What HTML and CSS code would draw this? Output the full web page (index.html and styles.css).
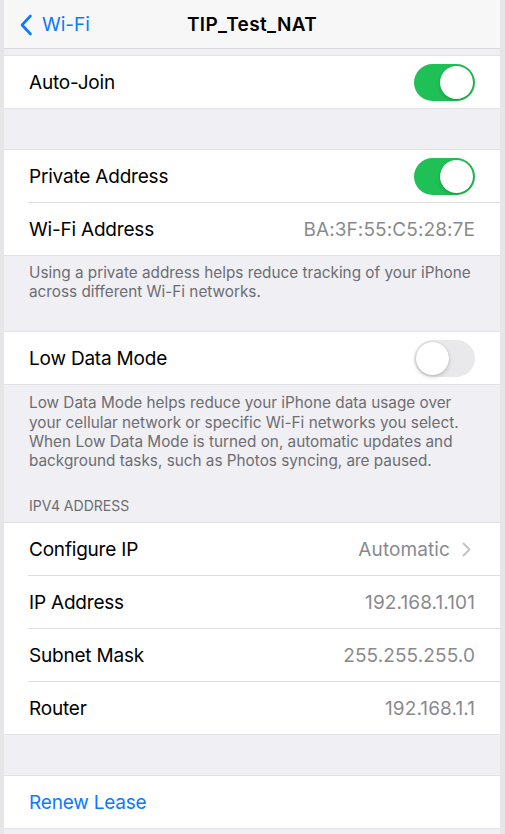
FILE: index.html
```html
<!DOCTYPE html>
<html lang="en">
<head>
<meta charset="utf-8">
<title>TIP_Test_NAT</title>
<link rel="stylesheet" href="styles.css">
</head>
<body>
<div class="screen">
  <header class="navbar">
    <div class="back">
      <svg class="back-icon" width="14" height="22" viewBox="0 0 14 22"><path d="M11.5 2 L3 11 L11.5 20" fill="none" stroke="#0a7aff" stroke-width="2.6" stroke-linecap="round" stroke-linejoin="round"/></svg>
      <span>Wi-Fi</span>
    </div>
    <div class="title">TIP_Test_NAT</div>
  </header>

  <section class="group g-first">
    <div class="row"><span class="label">Auto-Join</span><span class="toggle on"><span class="knob"></span></span></div>
  </section>

  <section class="group g-gap">
    <div class="row"><span class="label">Private Address</span><span class="toggle on"><span class="knob"></span></span></div>
    <div class="row sep"><span class="label">Wi-Fi Address</span><span class="value">BA:3F:55:C5:28:7E</span></div>
  </section>
  <p class="footer f1">Using a private address helps reduce tracking of your iPhone across different Wi-Fi networks.</p>

  <section class="group">
    <div class="row"><span class="label">Low Data Mode</span><span class="toggle"><span class="knob"></span></span></div>
  </section>
  <p class="footer f2">Low Data Mode helps reduce your iPhone data usage over your cellular network or specific Wi-Fi networks you select. When Low Data Mode is turned on, automatic updates and background tasks, such as Photos syncing, are paused.</p>

  <h2 class="section-title">IPV4 ADDRESS</h2>
  <section class="group">
    <div class="row"><span class="label">Configure IP</span><span class="value">Automatic<svg class="chev" width="9" height="15" viewBox="0 0 9 15"><path d="M1.5 1.5 L7.5 7.5 L1.5 13.5" fill="none" stroke="#c4c4c8" stroke-width="2" stroke-linecap="round" stroke-linejoin="round"/></svg></span></div>
    <div class="row sep"><span class="label">IP Address</span><span class="value">192.168.1.101</span></div>
    <div class="row sep"><span class="label">Subnet Mask</span><span class="value">255.255.255.0</span></div>
    <div class="row sep"><span class="label">Router</span><span class="value">192.168.1.1</span></div>
  </section>

  <section class="group g-gap">
    <div class="row"><span class="label link">Renew Lease</span></div>
  </section>
</div>
</body>
</html>
```

FILE: styles.css
```css
html, body {
  margin: 0;
  padding: 0;
}
body {
  background: #e6e6e9;
  font-family: Inter, "Noto Sans", "Liberation Sans", sans-serif;
  -webkit-font-smoothing: antialiased;
}
.screen {
  width: 496px;
  margin-left: 4px;
  min-height: 834px;
  background: #efeff4;
  overflow: hidden;
}
.navbar {
  height: 48px;
  background: #f7f7f8;
  border-bottom: 1px solid #d9d9dd;
  display: flex;
  align-items: center;
  justify-content: center;
  position: relative;
}
.back {
  position: absolute;
  left: 15px;
  top: 0;
  height: 48px;
  display: flex;
  align-items: center;
  gap: 9px;
  color: #0a7aff;
  font-size: 19px;
}
.back-icon { display: block; margin-top: 1px; }
.title {
  font-size: 19px;
  font-weight: 600;
  color: #000;
  letter-spacing: 0.35px;
}
.group {
  background: #fff;
  border-top: 1px solid #e2e2e6;
  border-bottom: 1px solid #e2e2e6;
}
.g-first { margin-top: 6px; }
.g-gap { margin-top: 40px; }
.row {
  height: 52px;
  display: flex;
  align-items: center;
  justify-content: space-between;
  padding: 0 25px 0 25px;
  position: relative;
}
.row.sep { border-top: 1px solid transparent; }
.row.sep::before {
  content: "";
  position: absolute;
  left: 24px;
  right: 0;
  top: -1px;
  height: 1px;
  background: #dededf;
}
.label {
  font-size: 19px;
  color: #000;
  letter-spacing: -0.2px;
}
.label.link { color: #0a7aff; }
.value {
  font-size: 19px;
  color: #8a8a8e;
  display: flex;
  align-items: center;
  gap: 12px;
  letter-spacing: 0.1px;
}
.chev { display: block; margin-right: 4px; }
.toggle {
  width: 61px;
  height: 37px;
  border-radius: 19px;
  background: #e9e9eb;
  position: relative;
  box-sizing: border-box;
}
.toggle.on { background: #1fc157; }
.knob {
  position: absolute;
  top: 2px;
  left: 2px;
  width: 33px;
  height: 33px;
  border-radius: 50%;
  background: #fff;
  box-shadow: 0 2px 4px rgba(0,0,0,0.18), 0 0 1px rgba(0,0,0,0.2);
}
.toggle.on .knob { left: 26px; }
.footer {
  margin: 0;
  padding: 7px 25px 30px 25px;
  font-size: 15.3px;
  line-height: 19.2px;
  color: #6d6d72;
  letter-spacing: 0;
}
.f2 { padding: 8px 25px 0 25px; }
.section-title {
  margin: 0;
  padding: 27px 25px 8px 25px;
  font-size: 14px;
  line-height: 17px;
  font-weight: 400;
  color: #6d6d72;
}
```
